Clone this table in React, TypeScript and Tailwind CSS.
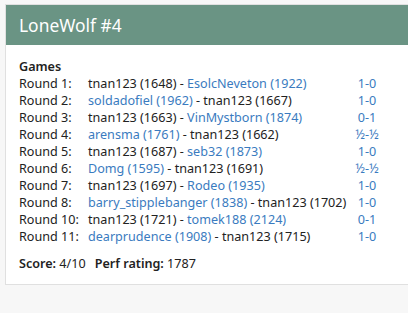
import React from "react";

type Row = { r: string; w: [string, string, boolean]; b: [string, string, boolean]; res: string };

const rows: Row[] = [
  { r: "Round 1:", w: ["tnan123", "1648", false], b: ["EsolcNeveton", "1922", true], res: "1-0" },
  { r: "Round 2:", w: ["soldadofiel", "1962", true], b: ["tnan123", "1667", false], res: "1-0" },
  { r: "Round 3:", w: ["tnan123", "1663", false], b: ["VinMystborn", "1874", true], res: "0-1" },
  { r: "Round 4:", w: ["arensma", "1761", true], b: ["tnan123", "1662", false], res: "½-½" },
  { r: "Round 5:", w: ["tnan123", "1687", false], b: ["seb32", "1873", true], res: "1-0" },
  { r: "Round 6:", w: ["Domg", "1595", true], b: ["tnan123", "1691", false], res: "½-½" },
  { r: "Round 7:", w: ["tnan123", "1697", false], b: ["Rodeo", "1935", true], res: "1-0" },
  { r: "Round 8:", w: ["barry_stipplebanger", "1838", true], b: ["tnan123", "1702", false], res: "1-0" },
  { r: "Round 10:", w: ["tnan123", "1721", false], b: ["tomek188", "2124", true], res: "0-1" },
  { r: "Round 11:", w: ["dearprudence", "1908", true], b: ["tnan123", "1715", false], res: "1-0" },
];

function P({ p }: { p: [string, string, boolean] }) {
  return (
    <span className={p[2] ? "text-[#3a7bc0]" : ""}>
      {p[0]} ({p[1]})
    </span>
  );
}

export default function App() {
  return (
    <div
      className="w-[408px] h-[313px] overflow-hidden bg-[#f7f7f7] pt-[4px] pl-[5px]"
      style={{ fontFamily: '"Noto Sans", "Open Sans", sans-serif' }}
    >
      <div className="w-[420px] bg-white border border-[#e0e0e0]">
        <div className="h-[40px] bg-[#6a9484] text-white text-[17.4px] pl-[13px] flex items-center">
          LoneWolf #4
        </div>
        <div className="pl-[13px] pt-[13px] pb-[12px] text-[12.6px] leading-[17px] text-[#222]">
          <div className="font-semibold">Games</div>
          <div>
            {rows.map((row) => (
              <div key={row.r} className="flex h-[17px] whitespace-nowrap">
                <div className="w-[69px] shrink-0">{row.r}</div>
                <div className="w-[267px] shrink-0">
                  <P p={row.w} /> - <P p={row.b} />
                </div>
                <div className="w-[24px] shrink-0 text-center text-[#3a7bc0]">{row.res}</div>
              </div>
            ))}
          </div>
          <div className="mt-[10px]">
            <span className="font-semibold">Score:</span> 4/10
            <span className="font-semibold ml-[9px]">Perf rating:</span> 1787
          </div>
        </div>
      </div>
    </div>
  );
}
